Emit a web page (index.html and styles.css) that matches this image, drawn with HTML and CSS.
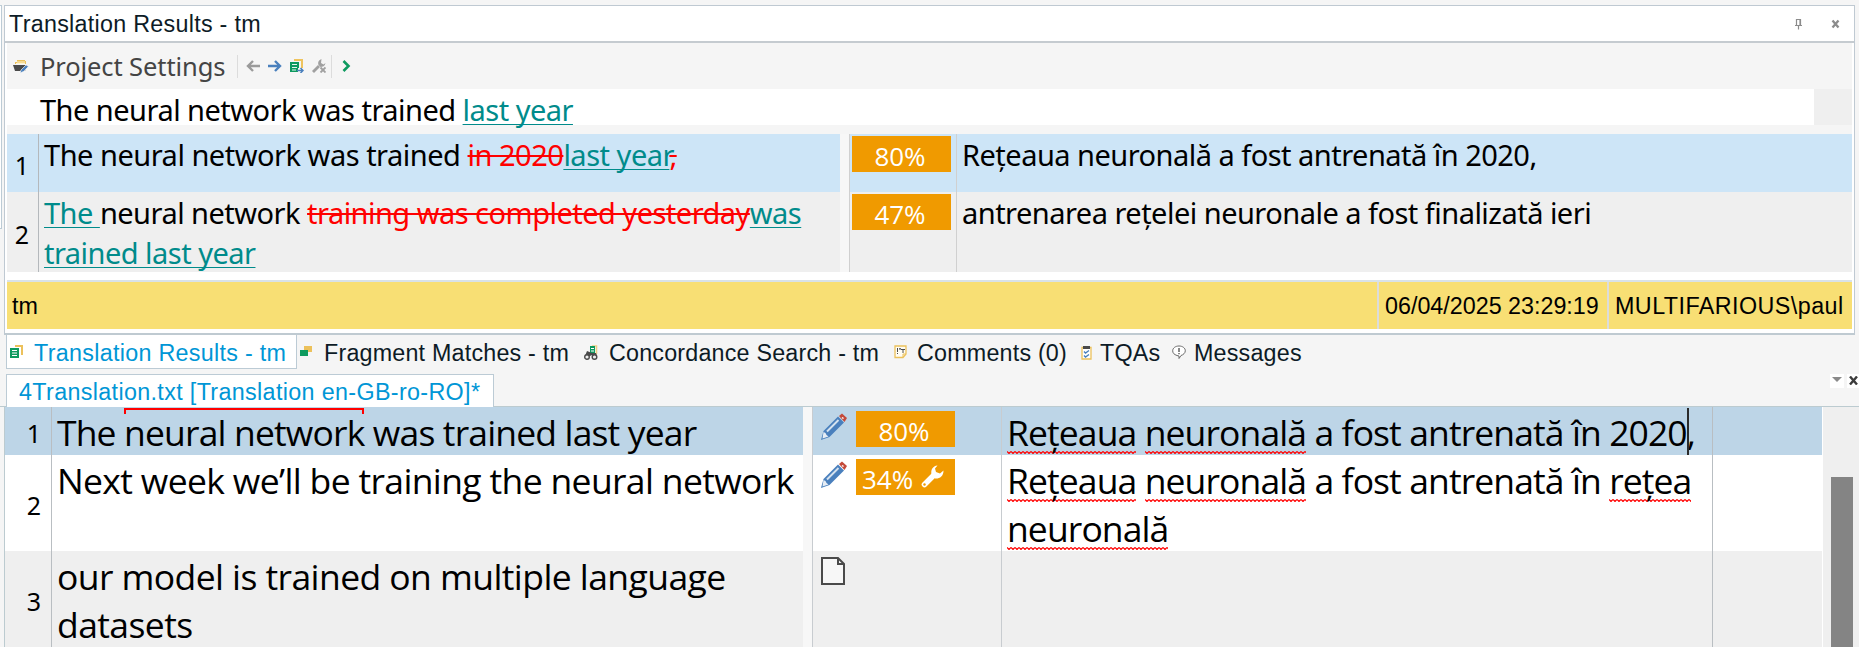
FILE: index.html
```
<!DOCTYPE html>
<html lang="en">
<head>
  <meta charset="UTF-8" />
  <meta name="viewport" content="width=device-width, initial-scale=1.0"/>
  <title>Translation Results - tm</title>
  <link rel="stylesheet" href="styles.css">
</head>
<body>

  <div class="side-panel"></div>

  <section class="results">
    <header class="title-bar">
      <h1>Translation Results - tm</h1>
      <div class="window-buttons">
        <svg width="10" height="12" viewBox="0 0 10 12"><path d="M2.5 7V1.5h4V7M6 1v6M1 7.5h7M4.500 8v3.500" fill="none" stroke="#8c8c8c" stroke-width="1.200"/></svg>
        <svg width="10" height="10" viewBox="0 0 10 10"><path d="M1.500 1.500l6 7M7.500 1.500l-6 7" stroke="#8c8c8c" stroke-width="2.300"/></svg>
      </div>
    </header>

    <div class="toolbar">
      <svg class="ic-project" width="16" height="15" viewBox="0 0 16 15">
        <path d="M2 5V3h2V1h8v1h1v3z" fill="#ecc15b"/><path d="M4 3h8M3 4.500h9" stroke="#fff3cf"/>
        <path d="M0 6h14l-2 6H2z" fill="#4a4a4a"/>
        <path d="M7 14l1-3 5-5 2.500 1.500-5 5z" fill="#4a80bd" stroke="#f5f5f5" stroke-width=".7"/>
      </svg>
      <span class="toolbar-label">Project Settings</span>
      <i class="sep"></i>
      <svg class="ic-nav" width="14" height="12" viewBox="0 0 14 12"><path d="M14 6H2M7 1L2 6l5 5" fill="none" stroke="#9a9a9a" stroke-width="2.400"/></svg>
      <svg class="ic-nav" width="14" height="12" viewBox="0 0 14 12"><path d="M0 6h12M7 1l5 5-5 5" fill="none" stroke="#4a80bd" stroke-width="2.400"/></svg>
      <svg class="ic-nav" width="14" height="14" viewBox="0 0 14 14">
        <path d="M4 1h8v8" fill="none" stroke="#efc45e" stroke-width="2"/>
        <path d="M0 3h9v10H0z" fill="#0e9a5f"/><path d="M2 5.500h5M2 8.500h5M2 11h4" stroke="#fff" stroke-width=".9"/>
        <path d="M8 9h6v5H8z" fill="#f5f5f5"/><path d="M7 11.500h6M10.500 9l2.500 2.500-2.500 2.500" fill="none" stroke="#4a80bd" stroke-width="1.500"/>
      </svg>
      <svg class="ic-nav" width="14" height="14" viewBox="0 0 14 14">
        <path d="M1 13l6-6" stroke="#a0a0a0" stroke-width="2.800"/><path d="M9.500 0C7 1 5.500 3 6.500 6l2 2c2 0 4.500-1 5-4l-2 1.500L9 4z" fill="#a0a0a0"/>
        <path d="M8 8h6v6H8z" fill="#f5f5f5"/><path d="M8.500 8.500l5 5M13.500 8.500l-5 5" stroke="#a0a0a0" stroke-width="1.800"/>
      </svg>
      <i class="sep sep-right"></i>
      <svg width="9" height="12" viewBox="0 0 9 12"><path d="M1.500 1l5 5-5 5" fill="none" stroke="#0e9a5f" stroke-width="2.600"/></svg>
    </div>

    <div class="query">
      <p class="seg">The neural network was trained <ins>last year</ins></p>
      <div class="query-end"></div>
    </div>

    <div class="match match-first">
      <div class="num">1</div>
      <p class="seg src">The neural network was trained <del>in 2020</del><ins>last year</ins><del>,</del></p>
      <div class="gutter"></div>
      <div class="score"><span class="badge">80%</span></div>
      <p class="seg tgt">Rețeaua neuronală a fost antrenată în 2020,</p>
    </div>
    <div class="match match-second">
      <div class="num">2</div>
      <p class="seg src"><ins>The </ins>neural network <del>training was completed yesterday</del><ins>was<br>trained last year</ins></p>
      <div class="gutter"></div>
      <div class="score"><span class="badge">47%</span></div>
      <p class="seg tgt">antrenarea rețelei neuronale a fost finalizată ieri</p>
    </div>
    <div class="match-tail"></div>

    <footer class="tm-info">
      <span class="tm-name">tm</span>
      <span class="tm-date">06/04/2025 23:29:19</span>
      <span class="tm-user">MULTIFARIOUS\paul</span>
    </footer>
  </section>

  <nav class="tabs">
    <a class="tab tab-active">
      <svg width="13" height="14" viewBox="0 0 13 14"><path d="M5 1h7v9" fill="none" stroke="#ecc15b" stroke-width="2"/><path d="M0 3h9v10H0z" fill="#0e9a5f"/><path d="M2 5.500h5M2 8h5M2 10.500h5" stroke="#fff"/></svg>
      <span>Translation Results - tm</span>
    </a>
    <a class="tab tab-fragment">
      <svg width="13" height="14" viewBox="0 0 13 14"><path d="M4 1h8v6H4z" fill="#ecc15b"/><path d="M0 5h8v6H0z" fill="#0e9a5f"/></svg>
      <span>Fragment Matches - tm</span>
    </a>
    <a class="tab tab-concordance">
      <svg width="14" height="16" viewBox="0 0 14 16"><path d="M8 1h4.500v8" fill="none" stroke="#efcf85" stroke-width="1.500"/><path d="M6 1h5v8H6z" fill="#0e9a5f"/><path d="M7 3.500h3M7 6h3" stroke="#fff"/><path d="M3 6l-2 5h5l2-1 1 2 4-1-1-3H8z" fill="#4a4a4a"/><circle cx="3" cy="12" r="2.300" fill="#eee" stroke="#4a4a4a" stroke-width="1.400"/><circle cx="10.500" cy="12" r="2.300" fill="#eee" stroke="#4a4a4a" stroke-width="1.400"/></svg>
      <span>Concordance Search - tm</span>
    </a>
    <a class="tab tab-comments">
      <svg width="13" height="14" viewBox="0 0 13 14"><path d="M1 1h11v8l-3 3.500H1z" fill="#fffdf5" stroke="#ecc15b" stroke-width="1.300"/><path d="M9 12V9h3" fill="none" stroke="#ecc15b"/><path d="M3.500 3v4M3.500 8v1M5.500 3.500h1M7 4.500h4M9 4v4M6 3v2" stroke="#4a4a4a"/></svg>
      <span>Comments (0)</span>
    </a>
    <a class="tab tab-tqas">
      <svg width="11" height="15" viewBox="0 0 11 15"><path d="M1 2.500h9V14H1z" fill="#fff" stroke="#ecc15b" stroke-width="1.300"/><path d="M2 1h7v3H2z" fill="#4a4a4a"/><path d="M3 6.500l1.500 1.500L8 5.500M3 10.500L4.500 12 8 9.500" fill="none" stroke="#4a80bd" stroke-width="1.400"/></svg>
      <span>TQAs</span>
    </a>
    <a class="tab tab-messages">
      <svg width="14" height="15" viewBox="0 0 14 15"><path d="M5 10.500C2 9.500.7 8 .7 5.800.7 3 3.500 1 7 1s6.300 2 6.300 4.800c0 2.200-2 4-4.300 4.700L7 13.500V11z" fill="#fff" stroke="#6a6a6a"/><path d="M7 3v4M7 8v1.200" stroke="#4a4a4a" stroke-width="1.300"/></svg>
      <span>Messages</span>
    </a>
  </nav>

  <div class="doc-tabs">
    <a class="doc-tab">4Translation.txt [Translation en-GB-ro-RO]*</a>
    <div class="doc-buttons">
      <span class="doc-button"><svg width="10" height="5" viewBox="0 0 10 5"><path d="M0 0h10L5 5z" fill="#8a8a8a"/></svg></span>
      <span class="doc-button doc-close"><svg width="9" height="9" viewBox="0 0 9 9"><path d="M1 .5l7 8M8 .5l-7 8" stroke="#3c3c3c" stroke-width="2.400"/></svg></span>
    </div>
  </div>

  <main class="editor">
    <div class="grid">
      <div class="row row-current">
        <div class="line-num">1</div>
        <p class="source">The <span class="term">neural network</span> was trained last year</p>
        <div class="gutter"></div>
        <div class="status">
          <svg width="28" height="28" viewBox="0 0 28 28"><use href="#pencil"/></svg>
          <span class="badge">80%</span>
        </div>
        <p class="target"><span class="typo">Rețeaua</span> <span class="typo">neuronală</span> a fost antrenată în 2020<i class="caret"></i>,</p>
        <div class="structure"></div>
      </div>
      <div class="row row-two">
        <div class="line-num">2</div>
        <p class="source">Next week we’ll be training the neural network</p>
        <div class="gutter"></div>
        <div class="status">
          <svg width="28" height="28" viewBox="0 0 28 28"><g id="pencil"><path d="M1 27l2.500-9L18 3.500l6 6L9.500 24z" fill="#4a80bd"/><path d="M7 18.500L18.500 7" stroke="#d5e2ef" stroke-width="2"/><path d="M3.500 19l2 1 1 2 2 1.500-6 2z" fill="#e6edf5"/><path d="M19 3l3-2.500 5 4.500-2.500 4z" fill="#c44a3a"/><path d="M22 4.500l1.500 1" stroke="#fff" stroke-width="1.500"/></g></svg>
          <span class="badge badge-at">34%<svg width="23" height="23" viewBox="0 0 23 23"><path d="M3.500 19.500L13 10" stroke="#fff" stroke-width="5.500" stroke-linecap="round"/><path d="M16.500.5C11.500 1 9.500 5 10.500 9.500l3.500 4c4.500.5 8.500-2 8.500-8L19 8.500 15 7l-1-3.500z" fill="#fff"/><circle cx="3.500" cy="19.500" r="1.200" fill="#f09a00"/></svg></span>
        </div>
        <p class="target"><span class="typo">Rețeaua</span> <span class="typo">neuronală</span> a fost antrenată în <span class="typo">rețea</span><br><span class="typo">neuronală</span></p>
        <div class="structure"></div>
      </div>
      <div class="row row-three">
        <div class="line-num">3</div>
        <p class="source">our model is trained on multiple language<br>datasets</p>
        <div class="gutter"></div>
        <div class="status">
          <svg class="ic-page" width="24" height="28" viewBox="0 0 24 28"><path d="M1 1h16l6 6v20H1z" fill="#f7f7f7" stroke="#4a4a4a" stroke-width="2"/><path d="M17 1v6h6" fill="none" stroke="#4a4a4a" stroke-width="2"/></svg>
        </div>
        <p class="target"></p>
        <div class="structure"></div>
      </div>
    </div>
    <div class="scrollbar"><div class="thumb"></div></div>
  </main>

</body>
</html>
```
FILE: styles.css
```
* {
  box-sizing: border-box;
}

body {
  margin: 0;
  height: 647px;
  padding-top: 5px;
  overflow: hidden;
  position: relative;
  background: #f5f5f5;
  color: #000;
  font-family: "Liberation Sans", Arial, sans-serif;
  font-size: 23.3px;
}

h1, p {
  margin: 0;
  font-weight: normal;
}

svg {
  display: block;
  flex: none;
}

/* edge of the docked panel on the left */
.side-panel {
  position: absolute;
  left: 0;
  top: 5px;
  width: 2px;
  height: 224px;
  background: #fff;
  border: 1px solid #bccbd5;
  border-left: 0;
}

/* translation results */
.results {
  width: 1851px;
  height: 330px;
  margin-left: 4px;
  padding: 0 2px;
  border: 1px solid #bfc9d2;
  border-bottom: 2px solid #bfcad1;
  background: #fff;
}

.title-bar {
  display: flex;
  justify-content: space-between;
  align-items: center;
  height: 37px;
  margin: 0 -2px;
  padding: 0 13px 0 4px;
  border-bottom: 2px solid #c5cbd0;
  color: #0d1b26;
}

.title-bar h1 {
  font-size: 23.3px;
  line-height: 36px;
  letter-spacing: .28px;
}

.window-buttons {
  display: flex;
  align-items: center;
  gap: 27px;
}

.toolbar {
  display: flex;
  align-items: center;
  height: 46px;
  padding-left: 6px;
  background: #f5f5f5;
}

.toolbar-label {
  width: 197px;
  margin-left: 11px;
  color: #444;
  font: 25.500px/46px "Noto Sans", sans-serif;
  letter-spacing: -.1px;
  white-space: nowrap;
}

.sep {
  width: 1px;
  height: 23px;
  background: #dcdcdc;
}

.ic-nav {
  margin-left: 8px;
}

.sep-right {
  margin: 0 10px 0 5px;
}

.seg {
  padding-top: 1px;
  font: 29px/40px "Noto Sans", sans-serif;
  letter-spacing: -.52px;
  white-space: nowrap;
}

ins {
  color: #008b8b;
  text-decoration: underline;
  text-decoration-thickness: 1px;
  text-underline-offset: 3px;
  text-decoration-skip-ink: none;
}

del {
  color: #f00;
  text-decoration: line-through;
  text-decoration-thickness: 2px;
}

.query {
  display: flex;
  justify-content: space-between;
  height: 36px;
  padding-left: 33px;
  line-height: 40px;
}

.query-end {
  width: 38px;
  background: #efefef;
}

.match {
  display: flex;
  background: #efefef;
}

.match-first {
  height: 67px;
  border-top: 9px solid #f5f5f5;
  background: #cde5f7;
}

.match-first .src {
  letter-spacing: -.49px;
}

.match-second {
  height: 80px;
}

.num {
  width: 32px;
  padding-right: 9px;
  border-right: 1px solid #b4b8bc;
  font: 25px/62px "Noto Sans", sans-serif;
  text-align: right;
  align-self: stretch;
}

.match-second .num {
  line-height: 84px;
}

.src {
  width: 801px;
  padding-left: 5px;
}

.gutter {
  width: 9px;
  background: #f7f7f7;
  flex: none;
}

.score {
  width: 108px;
  padding: 2px 0 0 2px;
  border-left: 1px solid #d0d0d0;
  border-right: 1px solid #d0d0d0;
}

.badge {
  display: block;
  width: 99px;
  height: 36px;
  padding-right: 3px;
  background: #f09a00;
  color: #fff;
  font: 26px/40px "Open Sans", "Noto Sans", sans-serif;
  text-align: center;
}

.tgt {
  padding-left: 5px;
}

.match-tail {
  height: 8px;
  background: #fff;
}

.tm-info {
  display: flex;
  height: 49px;
  border-top: 2px solid #d9e2e8;
  background: #f8df74;
  line-height: 49px;
}

.tm-name {
  flex: 1;
  padding-left: 5px;
}

.tm-date {
  width: 230px;
  padding-left: 6px;
  border-left: 2px solid #dcdcdc;
}

.tm-user {
  width: 245px;
  padding-left: 6px;
  border-left: 2px solid #dcdcdc;
  letter-spacing: .45px;
}

/* panel tabs */
.tabs {
  display: flex;
  height: 34px;
  margin-left: 6px;
  color: #0d1b26;
  line-height: 36px;
  letter-spacing: .2px;
}

.tab {
  display: flex;
  white-space: nowrap;
}

.tab svg {
  margin-top: 10px;
}

.tab-active {
  width: 291px;
  padding-left: 3px;
  gap: 11px;
  letter-spacing: .3px;
  border: 1px solid #bccbd5;
  border-top: 0;
  background: #fff;
  color: #0096d6;
}

.tab-fragment {
  width: 287px;
  padding-left: 3px;
  gap: 11px;
}

.tab-concordance {
  width: 309px;
  gap: 11px;
}

.tab-comments {
  width: 188px;
  padding-left: 1px;
  gap: 10px;
}

.tab-tqas {
  width: 91px;
  gap: 8px;
}

.tab-messages {
  gap: 8px;
}

/* open documents */
.doc-tabs {
  display: flex;
  justify-content: space-between;
  height: 38px;
  padding: 5px 0 0 6px;
  border-bottom: 1px solid #bccbd0;
}

.doc-tab {
  width: 488px;
  height: 33px;
  padding-left: 12px;
  border: 1px solid #bccbd5;
  border-bottom: 0;
  background: #fff;
  color: #0096d6;
  line-height: 34px;
  letter-spacing: .35px;
  white-space: nowrap;
}

.doc-buttons {
  display: flex;
  gap: 3px;
}

.doc-button {
  width: 14px;
  height: 14px;
  padding: 3px 2px;
  background: #fff;
}

.doc-close {
  width: 12px;
  padding: 2px;
}

/* editor */
.editor {
  display: flex;
  height: 240px;
  margin-left: 4px;
  border-left: 1px solid #bccbd0;
}

.grid {
  width: 1817px;
}

.row {
  display: flex;
  height: 96px;
}

.row-current {
  height: 48px;
  background: #bdd5e7;
}

.row-two {
  background: #fff;
}

.row-three {
  background: #efefef;
}

.line-num {
  width: 47px;
  padding-right: 10px;
  border-right: 1px solid #b9bec2;
  font: 25px/53px "Noto Sans", sans-serif;
  text-align: right;
}

.row-two .line-num,
.row-three .line-num {
  line-height: 101px;
}

.source,
.target {
  padding: 1px 0 0 5px;
  font: 35.500px/48px "Open Sans", "Noto Sans", sans-serif;
  white-space: nowrap;
}

.source {
  width: 751px;
  letter-spacing: -.85px;
}

.target {
  width: 710px;
  letter-spacing: -.9px;
}

.row-two .source {
  letter-spacing: -.65px;
}

.row-three .source {
  letter-spacing: -.58px;
}

.term {
  position: relative;
}

/* bracket over a recognised term */
.term::before {
  content: "";
  position: absolute;
  left: 0;
  right: 0;
  top: 0;
  height: 4px;
  border: 2px solid #f00;
  border-bottom: 0;
}

.typo {
  display: inline-block;
  height: 48px;
  vertical-align: top;
  background: url("data:image/svg+xml,%3Csvg xmlns='http://www.w3.org/2000/svg' width='4' height='3'%3E%3Cpath d='M0 .5L2 2.500L4 .5' fill='none' stroke='%23f00' stroke-width='1.200'/%3E%3C/svg%3E") repeat-x 0 43px;
}

.caret {
  position: relative;
}

.caret::before {
  content: "";
  position: absolute;
  left: 0;
  top: 0;
  width: 2px;
  height: 47px;
  background: #2b2b2b;
}

.status {
  display: flex;
  width: 190px;
  padding: 4px 0 0 7px;
  gap: 8px;
  border-left: 1px solid #c8ccd0;
  border-right: 1px solid #c8ccd0;
}

.status svg {
  margin-top: 2px;
}

.status .ic-page {
  margin-left: 1px;
}

.badge-at {
  display: flex;
  gap: 8px;
  padding-left: 6px;
}

.badge-at svg {
  margin-top: 6px;
}

.structure {
  flex: 1;
  border-left: 1px solid #b9bec2;
}

.scrollbar {
  flex: 1;
  padding: 70px 6px 0 8px;
  border-left: 1px solid #fff;
  background: #efefef;
}

.thumb {
  height: 170px;
  background: #848484;
}
```
